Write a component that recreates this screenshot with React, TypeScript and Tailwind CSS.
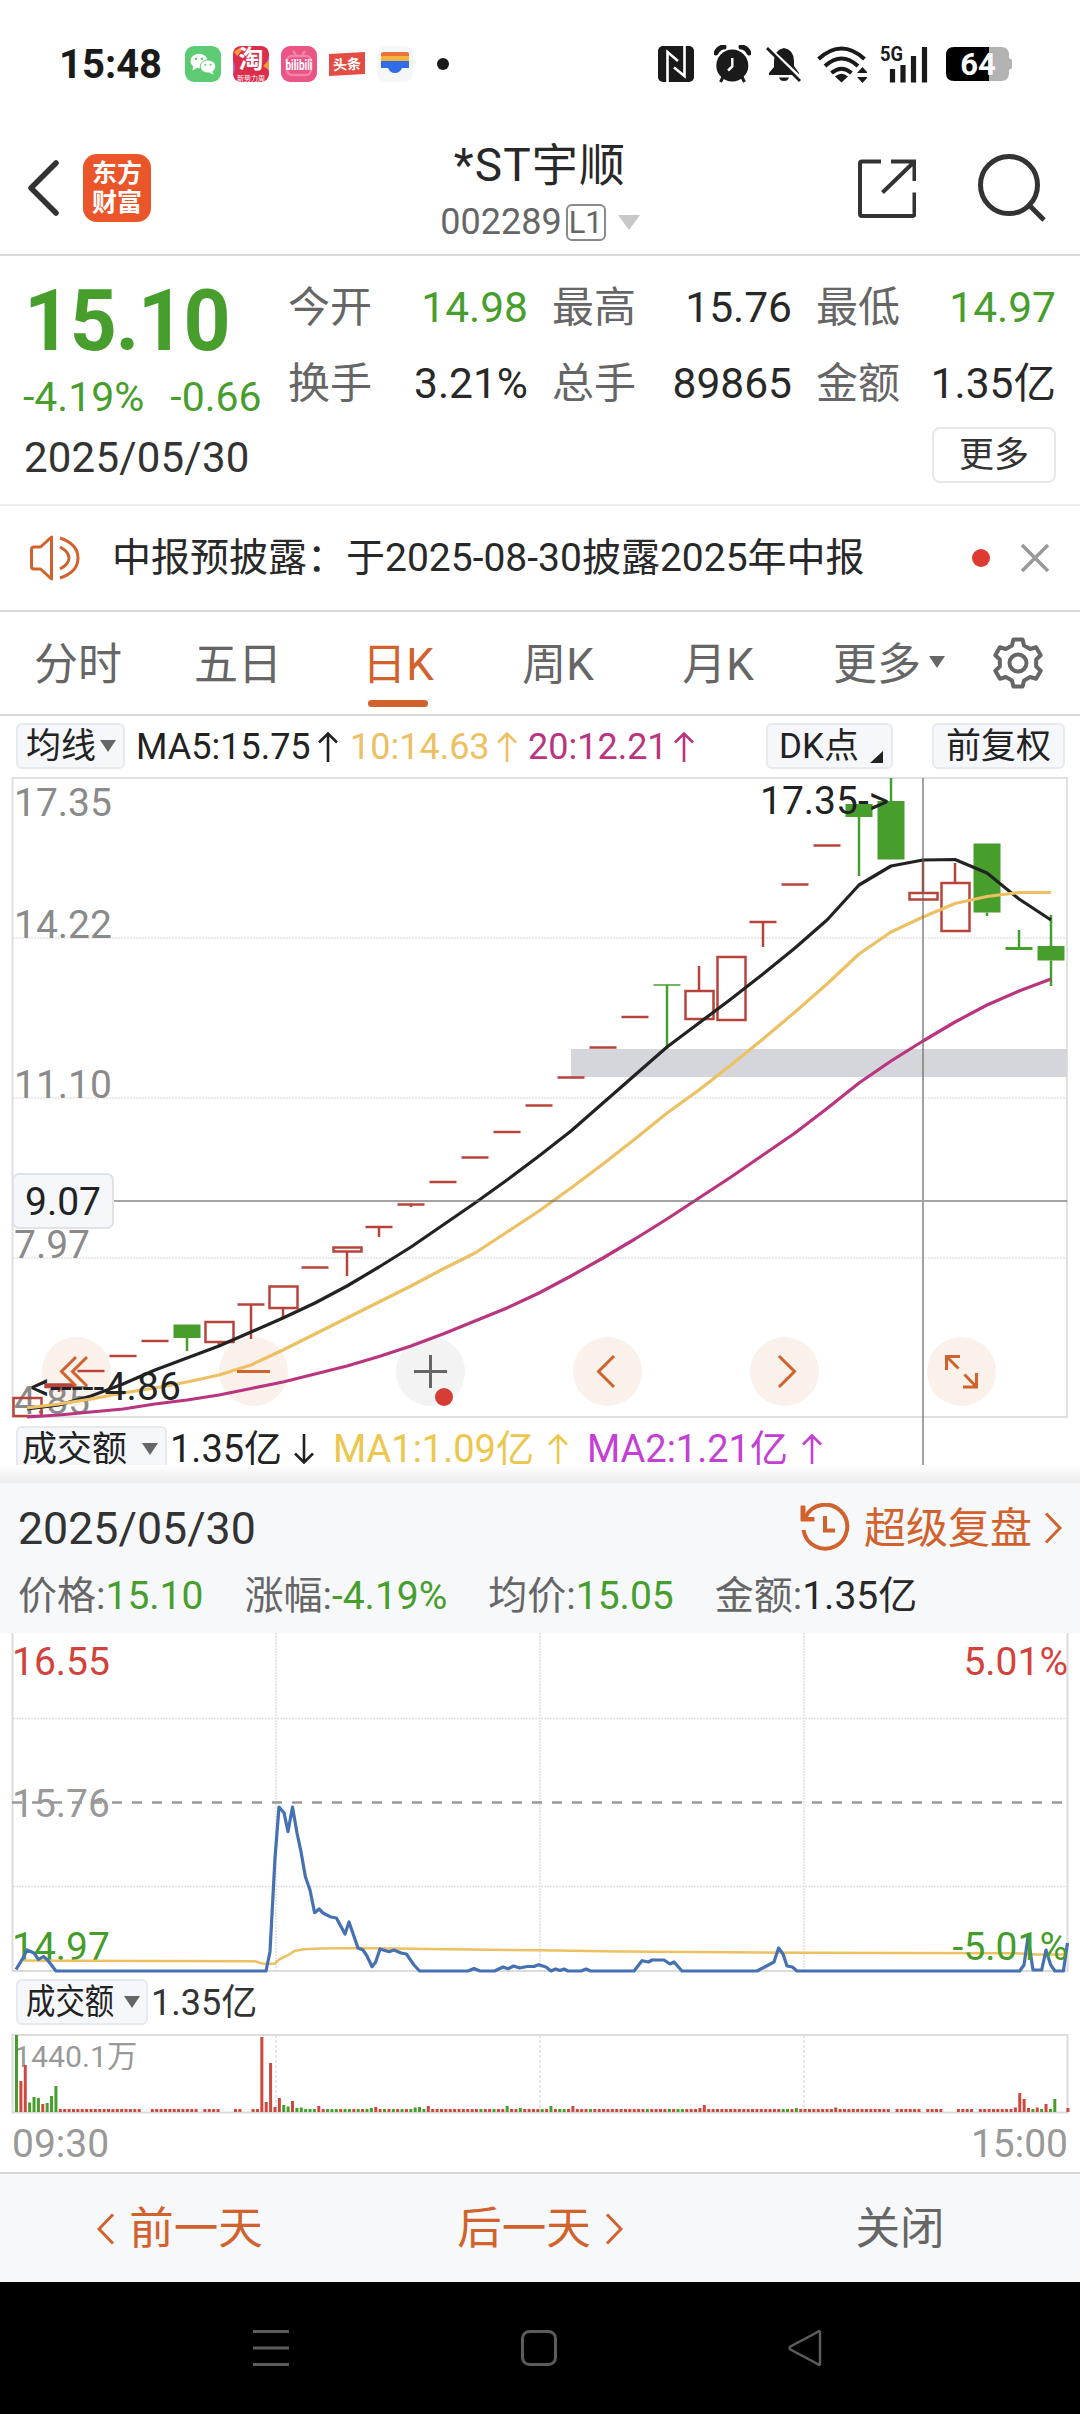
import { Fragment, type ReactNode } from 'react';

type Point = [number, number];

interface Candle {
    kind: 'up' | 'down' | 'flat' | 'flatDown';
    top: number;
    bottom: number;
    high?: number;
    low?: number;
}

const RED = '#b8433b';
const GREEN = '#479e2d';
const ORANGE = '#d2622d';

// y values are chart pixels, 17.35 sits on 778 and 4.85 on 1418
const CANDLES: Candle[] = [
    { kind: 'up', top: 1398, bottom: 1416 },
    { kind: 'up', top: 1384.5, bottom: 1387, low: 1392 },
    { kind: 'flat', top: 1371, bottom: 1371 },
    { kind: 'flat', top: 1356, bottom: 1356 },
    { kind: 'flat', top: 1341, bottom: 1341 },
    { kind: 'down', top: 1324.5, bottom: 1338, low: 1351 },
    { kind: 'up', top: 1322, bottom: 1342, low: 1347 },
    { kind: 'flat', top: 1304.5, bottom: 1304.5, low: 1339 },
    { kind: 'up', top: 1286.5, bottom: 1308, low: 1319 },
    { kind: 'flat', top: 1267.5, bottom: 1267.5 },
    { kind: 'up', top: 1247.5, bottom: 1251.5, low: 1276 },
    { kind: 'flat', top: 1227, bottom: 1227, low: 1237 },
    { kind: 'flat', top: 1204.5, bottom: 1204.5, low: 1207 },
    { kind: 'flat', top: 1182, bottom: 1182 },
    { kind: 'flat', top: 1157.5, bottom: 1157.5 },
    { kind: 'flat', top: 1132, bottom: 1132 },
    { kind: 'flat', top: 1105.5, bottom: 1105.5 },
    { kind: 'flat', top: 1077.5, bottom: 1077.5 },
    { kind: 'flat', top: 1047.5, bottom: 1047.5 },
    { kind: 'flat', top: 1017, bottom: 1017 },
    { kind: 'flatDown', top: 985, bottom: 985, low: 1049 },
    { kind: 'up', top: 991, bottom: 1019, high: 966 },
    { kind: 'up', top: 957, bottom: 1020 },
    { kind: 'flat', top: 922, bottom: 922, low: 947 },
    { kind: 'flat', top: 884.5, bottom: 884.5 },
    { kind: 'flat', top: 845.5, bottom: 845.5 },
    { kind: 'down', top: 804, bottom: 817, low: 876 },
    { kind: 'down', top: 801, bottom: 859.5, high: 778 },
    { kind: 'up', top: 893, bottom: 899.5, high: 861 },
    { kind: 'up', top: 883, bottom: 931, high: 863 },
    { kind: 'down', top: 843.5, bottom: 912.5, low: 916 },
    { kind: 'down', top: 947, bottom: 950, high: 930 },
    { kind: 'down', top: 946, bottom: 960.5, high: 915, low: 986 },
];

const candleX = (i: number) => 27 + i * 32;

const MA5 = [
    1409, 1405, 1396, 1384, 1370, 1358, 1346, 1332, 1318, 1303, 1286, 1267, 1247, 1225, 1203, 1180, 1156,
    1131, 1103, 1075, 1047, 1023, 999, 974, 948, 920, 885, 866, 860, 859.5, 873, 899, 920,
];
const MA10 = [
    1408, 1404, 1399, 1393, 1388, 1382, 1375, 1365, 1350, 1334, 1318, 1302, 1286, 1269, 1253, 1232, 1211,
    1188, 1164, 1139, 1113, 1090, 1065, 1039, 1012, 984, 954, 932, 917, 903.5, 896.5, 892.5, 892.5,
];
const MA20 = [
    1417, 1415, 1412, 1409, 1404, 1400, 1395, 1388.5, 1382, 1374, 1366, 1356.5, 1346, 1334, 1321, 1308, 1293,
    1276, 1258, 1239, 1219, 1198, 1177, 1155, 1133, 1108.5, 1083, 1061, 1041, 1022, 1005, 991, 979,
];

const PRICE_LINE: Point[] = [
    [16, 1969.5], [23, 1958], [27, 1950], [34, 1953], [38.5, 1959.5], [43.5, 1956.5], [47.5, 1960], [56, 1971],
    [266, 1971], [270, 1951.7], [275, 1858], [279, 1807], [284, 1812.7], [288, 1831.7], [292.5, 1807], [297, 1833],
    [301, 1851.7], [305.4, 1876.7], [310, 1890], [314.6, 1912.7], [319, 1909], [323, 1913], [330, 1916.7],
    [336.4, 1918], [345, 1934], [349, 1922], [358, 1948], [363, 1950], [367, 1956], [372, 1966.7], [375.7, 1962],
    [380, 1949], [389, 1951.7], [394, 1950], [401, 1953], [406.4, 1954], [414, 1965], [419.6, 1971], [468, 1971],
    [474, 1968.5], [480, 1971], [494.6, 1971], [503, 1967], [508, 1968.7], [513.6, 1966], [519.6, 1968], [527, 1966.5],
    [534, 1966.5], [538.6, 1964.7], [546, 1967], [551, 1971], [555.5, 1969], [560, 1970.5], [564, 1969], [568, 1971],
    [581, 1971], [586, 1969], [590.6, 1971], [634, 1971], [642, 1960.7], [648.5, 1962], [652, 1960], [664, 1960],
    [670, 1964], [674, 1962], [682, 1971], [757, 1971], [774, 1962], [778.6, 1948], [783, 1954], [787, 1966],
    [792.4, 1967], [797, 1971], [1019.7, 1971], [1024, 1965], [1028, 1937], [1033, 1970], [1041.7, 1970],
    [1046, 1950], [1050.7, 1965], [1055, 1971], [1063.4, 1971], [1067.5, 1943],
];

const AVG_LINE: Point[] = [
    [23, 1960.5], [60, 1960.7], [255, 1961.3], [262, 1963.5], [266, 1964], [275, 1963.5], [279, 1959.5], [288.6, 1955],
    [294.6, 1951], [303.6, 1949.3], [321, 1948.5], [357, 1948], [429, 1949], [540, 1950.3], [620, 1951.5],
    [804, 1952.7], [1015, 1953.3], [1036, 1954.5], [1066, 1954.5],
];

// minute volume: index -> height in px, negative means a falling minute
const VOLUME: Record<number, number> = {
    0: -77, 1: 31, 2: 47, 3: -9.5, 4: -15, 5: -14, 6: 8, 7: -9, 8: -16, 9: -26,
    56: 75, 57: 10, 58: 49, 59: 5, 60: 14, 61: -7, 62: -5.5, 63: 11, 64: -4, 65: -4.5, 69: 6,
    81: -4, 82: 5, 91: -4.5, 92: -5, 94: 6, 112: -6, 115: -4, 122: -6, 127: 6, 156: 4, 157: 7,
    178: -4, 187: 4.5, 228: 4.5, 229: 19, 230: 13, 231: 4, 233: 4.5, 235: 8, 237: -13, 240: 4,
};
const FALLING = [66, 67, 68, 71, 72, 73, 75, 76, 78, 80, 84, 86, 88, 90, 93, 106, 109, 120, 124, 125, 131, 144, 149, 151, 152, 175, 176, 232, 234, 236];
const EMPTY = [29, 30, 42, 47, 48, 49, 52, 53, 200, 207, 212, 213, 214, 219, 238, 239];

const toPoints = (pts: Point[]) => pts.map(p => p.join(',')).join(' ');
const maPoints = (ys: number[]) => ys.map((y, i) => `${candleX(i)},${y}`).join(' ');

const QUOTES = [
    { label: '今开', value: '14.98', down: true },
    { label: '最高', value: '15.76' },
    { label: '最低', value: '14.97', down: true },
    { label: '换手', value: '3.21%' },
    { label: '总手', value: '89865' },
    { label: '金额', value: '1.35亿' },
];

const TABS = ['分时', '五日', '日K', '周K', '月K'];

const SUMMARY = [
    { label: '价格', value: '15.10', down: true },
    { label: '涨幅', value: '-4.19%', down: true },
    { label: '均价', value: '15.05', down: true },
    { label: '金额', value: '1.35亿' },
];

function gearPath() {
    const pts: string[] = [];
    for (let k = 0; k < 6; k++) {
        const steps: Point[] = [[-19, 18.5], [-11, 24], [11, 24], [19, 18.5]];
        steps.forEach(([deg, r]) => {
            const a = ((k * 60 - 90 + deg) * Math.PI) / 180;
            pts.push(`${(26 + r * Math.cos(a)).toFixed(2)},${(26 + r * Math.sin(a)).toFixed(2)}`);
        });
    }
    return `M${pts.join('L')}Z`;
}

function Arrow({ color, down, className = '' }: { color: string; down?: boolean; className?: string }) {
    return (
        <svg width="20" height="30" viewBox="0 0 20 30" className={className}>
            <path
                d={down ? 'M10 0V29M1 19.5L10 28.5L19 19.5' : 'M10 30V1M1 10.5L10 1.5L19 10.5'}
                fill="none" stroke={color} strokeWidth="2.6"
            />
        </svg>
    );
}

function Caret({ color = '#666', w = 16, h = 12 }: { color?: string; w?: number; h?: number }) {
    return (
        <svg width={w} height={h} viewBox="0 0 16 12" preserveAspectRatio="none">
            <path d="M0 0H16L8 12Z" fill={color} />
        </svg>
    );
}

function Chevron({ left, color = ORANGE }: { left?: boolean; color?: string }) {
    return (
        <svg width="18" height="32" viewBox="0 0 18 32">
            <path d={left ? 'M16 1.5L2 16L16 30.5' : 'M2 1.5L16 16L2 30.5'} fill="none" stroke={color} strokeWidth="3" />
        </svg>
    );
}

function Chip({ children, className = '' }: { children: ReactNode; className?: string }) {
    return (
        <div className={`flex h-[46px] shrink-0 items-center rounded-md border-2 border-[#e6e9ed] bg-[#f6f7fa] text-[35px] text-[#222] ${className}`}>
            {children}
        </div>
    );
}

function StatusBar() {
    return (
        <div className="flex h-32 items-center pl-[59px] text-[#1a1a1a]">
            <span className="w-[126px] pt-0.5 text-[40px] font-bold">15:48</span>
            <div className="flex items-center gap-3">
                <svg width="36" height="36" viewBox="0 0 36 36">
                    <rect width="36" height="36" rx="9" fill="#5ccb73" />
                    <ellipse cx="14" cy="15" rx="8.5" ry="7.3" fill="#fff" />
                    <path d="M8 20L7.5 24.5L12 22Z" fill="#fff" />
                    <ellipse cx="23" cy="20.5" rx="7.8" ry="6.6" fill="#fff" stroke="#5ccb73" strokeWidth="1" />
                    <path d="M27 25L28.5 28.5L24 26.5Z" fill="#fff" />
                    <g fill="#5ccb73">
                        <circle cx="11" cy="12.8" r="1.2" /><circle cx="17" cy="12.8" r="1.2" />
                        <circle cx="20.4" cy="18.8" r="1" /><circle cx="25.6" cy="18.8" r="1" />
                    </g>
                </svg>
                <svg className="overflow-visible" width="36" height="36" viewBox="0 0 36 36">
                    <rect width="36" height="36" rx="8" fill="#dc2d4a" />
                    <path d="M0 14Q4 24 0 28ZM36 10Q31 20 36 26Z" fill="#b96ad0" />
                    <path d="M1 6Q6 1 12 1L4 10ZM30 20L36 14V24Z" fill="#f29a3c" />
                    <text x="18" y="22" textAnchor="middle" fontSize="25" fontWeight="700" fill="#fff">淘</text>
                    <text x="18" y="34.5" textAnchor="middle" fontSize="7" fill="#fff">新势力周</text>
                </svg>
                <svg className="overflow-visible" width="36" height="36" viewBox="0 0 36 36">
                    <rect width="36" height="36" rx="9" fill="#ea5586" />
                    <rect x="6" y="10" width="24" height="19" rx="5" fill="none" stroke="#f283a7" strokeWidth="2.4" />
                    <path d="M12 5L15 9M24 5L21 9" stroke="#f283a7" strokeWidth="2.4" />
                    <text x="18" y="24" textAnchor="middle" fontSize="14" fontWeight="700" fill="#fff" textLength="27" lengthAdjust="spacingAndGlyphs">bilibili</text>
                </svg>
                <svg className="overflow-visible" width="36" height="36" viewBox="0 0 36 36">
                    <path d="M0 8L36 6V28L0 30Z" fill="#e44b43" />
                    <text x="18" y="23.500" textAnchor="middle" fontSize="14" fontWeight="700" fill="#fff" transform="rotate(-3 18 18)">头条</text>
                </svg>
                <svg width="36" height="36" viewBox="0 0 36 36">
                    <rect width="36" height="36" rx="9" fill="#f5f6f8" />
                    <path d="M4 10V8Q4 6 6 6H30Q32 6 32 8V10Z" fill="#e8743b" />
                    <rect x="4" y="10" width="28" height="5" fill="#f5b43e" />
                    <path d="M4 15H32V22H25Q23 27 18 27Q13 27 11 22H4Z" fill="#2f6ee6" />
                </svg>
            </div>
            <span className="ml-6 h-3 w-3 rounded-full bg-[#1a1a1a]" />
            <svg className="ml-[209px]" width="36" height="36" viewBox="0 0 36 36">
                <rect width="36" height="36" rx="5" fill="#1a1a1a" />
                <path d="M9.5 36V6L20 15M26.5 0V30L16 21.5" fill="none" stroke="#fff" strokeWidth="2.6" />
            </svg>
            <svg className="ml-5" width="37" height="38" viewBox="0 0 37 38">
                <circle cx="18.3" cy="20.5" r="16" fill="#1a1a1a" />
                <path d="M2 8Q5 2 10 2M35 8Q32 2 27 2" stroke="#1a1a1a" strokeWidth="5" fill="none" strokeLinecap="round" />
                <path d="M9 32L6.5 37M28 32L30.5 37" stroke="#1a1a1a" strokeWidth="3" />
                <path d="M18.3 13V21.5L14 25.5" stroke="#fff" strokeWidth="2.4" fill="none" />
            </svg>
            <svg className="ml-[15px]" width="36" height="36" viewBox="0 0 36 36">
                <path d="M18 2Q28 4 28 15V20L33 27V29H3V27L8 21V15Q8 4 18 2Z" fill="#1a1a1a" />
                <path d="M13 31.5H23Q22 35 18 35Q14 35 13 31.5Z" fill="#1a1a1a" />
                <path d="M0 -1L36 33" stroke="#fff" strokeWidth="3" />
                <path d="M1 2L34 35" stroke="#1a1a1a" strokeWidth="2.8" />
            </svg>
            <svg className="ml-[15px]" width="50" height="37" viewBox="0 0 50 37">
                <path d="M1.5 13Q24.5 -8 47.5 13M8 20Q24.5 5 41 20M14.5 27Q24.5 18.5 34.5 27" fill="none" stroke="#1a1a1a" strokeWidth="4" />
                <path d="M18 30.5Q24.5 25 31 30.5L24.5 36.5Z" fill="#1a1a1a" />
                <path d="M40 27H51L45.5 21ZM40 31H51L45.5 37Z" fill="#1a1a1a" />
            </svg>
            <svg className="ml-[13px] overflow-visible" width="49" height="38" viewBox="0 0 49 38">
                <text x="0" y="16" fontSize="21" fontWeight="700" fill="#1a1a1a" textLength="23" lengthAdjust="spacingAndGlyphs">5G</text>
                <path d="M12.5 37.5V24M23 37.5V20M33.5 37.5V11M44.5 37.5V2" stroke="#1a1a1a" strokeWidth="5.2" />
            </svg>
            <svg className="ml-[17px] overflow-visible" width="66" height="34" viewBox="0 0 66 34">
                <path d="M43 0H55Q63 0 63 8V11L66 13V21L63 23V26Q63 34 55 34H43Z" fill="#b3b3b3" />
                <path d="M43 0H8Q0 0 0 8V26Q0 34 8 34H43Z" fill="#000" />
                <text x="32" y="28" textAnchor="middle" fontSize="31" fontWeight="700" fill="#fff">64</text>
            </svg>
        </div>
    );
}

function Header() {
    return (
        <header className="flex h-32 items-center border-b-2 border-[#d9d9d9] pb-1.5 pl-7">
            <svg width="32" height="56" viewBox="0 0 32 56">
                <path d="M28 3L3 28L28 53" fill="none" stroke="#333" strokeWidth="5.5" strokeLinecap="round" strokeLinejoin="round" />
            </svg>
            <div className="ml-[23px] flex h-[68px] w-[68px] flex-col items-center justify-center rounded-[14px] bg-[#ea5529] text-[25px] leading-[29px] font-bold text-white">
                <span>东方</span>
                <span>财富</span>
            </div>
            <div className="ml-[239px] mt-[9px] flex w-[300px] flex-col items-center self-start">
                <h1 className="h-14 text-[46px] leading-[56px] tracking-[1.2px] whitespace-nowrap text-[#282828]">*ST宇顺</h1>
                <div className="flex h-14 items-center pt-0.5 text-[36px] text-[#666]">
                    002289
                    <span className="ml-1 flex h-[37px] w-10 items-center justify-center rounded-md border-2 border-[#8a8a8a] text-[31px]">L1</span>
                    <span className="ml-3 flex"><Caret color="#c8c8c8" w={22} h={15} /></span>
                </div>
            </div>
            <svg className="ml-[166px]" width="60" height="60" viewBox="0 0 60 60">
                <path d="M25 3.5H6Q4 3.5 4 5.5V56Q4 58 6 58H56.500Q58.5 58 58.5 56V34.500" fill="none" stroke="#333" strokeWidth="4" />
                <path d="M35 3.500H58.5V23M26.500 34.500L57 5" fill="none" stroke="#333" strokeWidth="4" />
            </svg>
            <svg className="-mt-0.5 ml-[60px]" width="70" height="70" viewBox="0 0 70 70">
                <circle cx="33" cy="33" r="28.500" fill="none" stroke="#333" strokeWidth="5" />
                <path d="M53 53L68 68" stroke="#333" strokeWidth="5" />
            </svg>
        </header>
    );
}

function Quote() {
    return (
        <section className="h-[250px] border-b-2 border-[#ededed] px-6">
            <div className="flex h-[174px] text-[#479e2d]">
                <div className="w-[264px] shrink-0 pt-6">
                    <div className="flex h-[82px] items-center text-[86px] font-bold tracking-[-1.5px]">
                        <span className="origin-left scale-x-[.955]">15.10</span>
                    </div>
                    <div className="flex h-[70px] items-center gap-[26px] text-[41px]">
                        <span className="-ml-px">-4.19%</span>
                        <span>-0.66</span>
                    </div>
                </div>
                <div className="grid h-[165px] w-[768px] shrink-0 auto-rows-[76px] grid-cols-3 gap-x-6 pt-3.5 text-[42px]">
                    {QUOTES.map(q => (
                        <div key={q.label} className="flex items-center justify-between whitespace-nowrap">
                            <span className="text-[#666]">{q.label}</span>
                            <span className={`text-[42.5px] ${q.down ? 'text-[#479e2d]' : 'text-[#282828]'}`}>{q.value}</span>
                        </div>
                    ))}
                </div>
            </div>
            <div className="flex h-[54px] items-center justify-between">
                <span className="pt-0.5 text-[42px] tracking-[.2px] text-[#333]">2025/05/30</span>
                <button className="-mt-1 h-14 w-[124px] rounded-lg border-2 border-[#e6e8eb] text-[35px] text-[#333]">更多</button>
            </div>
        </section>
    );
}

function Notice() {
    return (
        <section className="flex h-[106px] items-center border-b-2 border-[#d9d9d9] pl-[29px]">
            <svg width="52" height="46" viewBox="0 0 52 46">
                <path d="M22.500 2V44L11.500 34H5Q2.500 34 2.500 31.500V14.500Q2.500 12 5 12H11.500Z" fill="none" stroke={ORANGE} strokeWidth="3" strokeLinejoin="round" />
                <path d="M31 12Q40 17 40 23Q40 29 31 34M31 3Q49 9 49 23Q49 37 31 43" fill="none" stroke={ORANGE} strokeWidth="3" />
            </svg>
            <span className="ml-[31px] w-[860px] text-[39px] whitespace-nowrap text-[#282828]">中报预披露：于2025-08-30披露2025年中报</span>
            <span className="h-[18px] w-[18px] shrink-0 rounded-full bg-[#dd3b32]" />
            <svg className="ml-[30px]" width="30" height="30" viewBox="0 0 30 30">
                <path d="M2 2L28 28M28 2L2 28" stroke="#999" strokeWidth="3.500" />
            </svg>
        </section>
    );
}

function Tabs() {
    return (
        <nav className="flex h-[104px] border-b-2 border-[#d9d9d9] text-[44px] text-[#666]">
            <div className="-ml-0.5 flex">
                {TABS.map(t => (
                    <div key={t} className={`relative flex w-40 items-center justify-center pt-1 ${t === '日K' ? 'text-[#d2622d]' : ''}`}>
                        {t}
                        {t === '日K' && <span className="absolute bottom-[7px] h-[7px] w-[60px] rounded-full bg-[#d2622d]" />}
                    </div>
                ))}
            </div>
            <div className="flex w-[194px] items-center gap-2 pt-1 pl-[35px]">
                更多
                <span className="-mt-1.5 flex"><Caret /></span>
            </div>
            <div className="flex items-center">
                <svg width="52" height="52" viewBox="0 0 52 52">
                    <path d={gearPath()} fill="none" stroke="#666" strokeWidth="4" strokeLinejoin="round" />
                    <circle cx="26" cy="26" r="8.500" fill="none" stroke="#666" strokeWidth="4" />
                </svg>
            </div>
        </nav>
    );
}

function MaRow() {
    return (
        <div className="flex h-[62px] items-center pr-[15px] pl-4 text-[36px] whitespace-nowrap">
            <Chip className="-mt-0.5 w-[109px] gap-1 pl-2">均线<Caret /></Chip>
            <span className="ml-[11px] w-[173px] text-[#222]">MA5:15.75</span>
            <Arrow color="#222" className="ml-[9px]" />
            <span className="ml-3 w-[137px] text-[#ecc063]">10:14.63</span>
            <Arrow color="#ecc063" className="ml-[10px]" />
            <span className="ml-[11px] w-[138px] text-[#b9357f]">20:12.21</span>
            <Arrow color="#b9357f" className="ml-[8px]" />
            <Chip className="-mt-0.5 ml-auto w-[127px] pl-[11px]">
                DK点
                <svg className="ml-[11px] mt-[22px]" width="13" height="12" viewBox="0 0 13 12"><path d="M13 0V12H0Z" fill="#222" /></svg>
            </Chip>
            <Chip className="-mt-0.5 ml-[39px] w-[133px] justify-center">前复权</Chip>
        </div>
    );
}

function CandleShape({ candle, x }: { candle: Candle; x: number }) {
    const { kind, top, bottom, high, low } = candle;
    const color = kind === 'down' || kind === 'flatDown' ? GREEN : RED;
    return (
        <g stroke={color} strokeWidth="2.5" fill="none">
            {high !== undefined && <path d={`M${x} ${high}V${top}`} />}
            {low !== undefined && <path d={`M${x} ${bottom}V${low}`} />}
            {kind === 'up' && <rect x={x - 13.5} y={top} width="28" height={bottom - top} />}
            {kind === 'down' && <rect x={x - 13.500} y={top} width="27" height={bottom - top} fill={color} stroke="none" />}
            {kind === 'flat' && <path d={`M${x - 13.500} ${top}H${x + 13.500}`} />}
            {kind === 'flatDown' && <path d={`M${x - 13.500} ${top}H${x + 13.500}`} strokeWidth="1.500" />}
        </g>
    );
}

function KLineChart() {
    return (
        <svg className="block overflow-visible" width="1080" height="640" viewBox="0 778 1080 640">
            <g stroke="#e3e3e3" strokeWidth="1.5" strokeDasharray="2 1">
                <path d="M13 938H1067M13 1098H1067M13 1258H1067" />
            </g>
            <rect x="12.500" y="778" width="1054.500" height="639" fill="none" stroke="#e0e0e0" strokeWidth="2" />
            <rect x="571" y="1049" width="496" height="28" fill="#d5d6db" />
            {[76.5, 253.5, 430.5, 607.5, 784.5, 961.5].map((cx, i) => (
                <circle key={cx} cx={cx} cy="1371.500" r="34.500" fill={i === 2 ? '#f3f3f3' : '#fbf1eb'} />
            ))}
            <g fontSize="39" fill="#8a8a8a">
                <text x="14" y="815.500">17.35</text>
                <text x="14" y="938">14.22</text>
                <text x="14" y="1098">11.10</text>
                <text x="14" y="1258">7.97</text>
                <text x="14" y="1414">4.85</text>
            </g>
            {CANDLES.map((c, i) => <CandleShape key={i} candle={c} x={candleX(i)} />)}
            <g fill="none" strokeWidth="3.200" strokeLinejoin="round">
                <polyline points={maPoints(MA5)} stroke="#222" />
                <polyline points={maPoints(MA10)} stroke="#ecc063" />
                <polyline points={maPoints(MA20)} stroke="#b9357f" />
            </g>
            <path d="M113 1201H1067M923 778V1465" stroke="#666" strokeOpacity=".6" strokeWidth="2" />
            <g fontSize="39" fill="#222">
                <text x="760" y="814">17.35-&gt;</text>
                <text x="30" y="1400" textLength="151">&lt;-----4.86</text>
            </g>
            <rect x="13" y="1174" width="100" height="54" rx="6" fill="#f6f7fa" stroke="#dfe2e6" strokeWidth="2" />
            <text x="25" y="1215" fontSize="39" fill="#222">9.07</text>
            <g fill="none" stroke={ORANGE} strokeWidth="3">
                <path d="M76 1357L61.500 1371.500L76 1386M87 1357L72.500 1371.500L87 1386" />
                <path d="M237 1371.500H270" />
                <path d="M614 1356L598.500 1371.500L614 1387M779 1356L794.500 1371.500L779 1387" />
                <path d="M946.500 1370V1356.500H960M946.500 1356.500L958.500 1368.500M976.500 1373V1387H963M976.500 1387L964.500 1374.500" />
            </g>
            <path d="M414 1371.500H447M430.500 1355V1388" stroke="#666" strokeWidth="3" />
            <circle cx="444" cy="1397" r="9" fill="#d53c33" />
        </svg>
    );
}

function AmountRow() {
    return (
        <div className="flex h-[47px] items-start overflow-hidden pt-2 pl-4 text-[38px] whitespace-nowrap">
            <Chip className="w-[151px] gap-[15px] pl-1">成交额<Caret /></Chip>
            <div className="flex h-[45px] items-center">
                <span className="ml-[3px] w-[117px] text-[#222]">1.35亿</span>
                <Arrow color="#222" down className="ml-[7px]" />
                <span className="ml-[19px] w-[202px] text-[#ecc64d]">MA1:1.09亿</span>
                <Arrow color="#ecc64d" className="ml-[13px]" />
                <span className="ml-[19px] w-[202px] text-[#c43fd3]">MA2:1.21亿</span>
                <Arrow color="#c43fd3" className="ml-[13px]" />
            </div>
        </div>
    );
}

function DayPanel() {
    return (
        <div className="h-[150px] bg-[#f6f8fa] px-[18px]">
            <div className="flex h-[90px] items-center justify-between">
                <span className="pt-0.5 text-[44.7px] text-[#333]">2025/05/30</span>
                <div className="flex items-center text-[42px] text-[#d2622d]">
                    <svg width="50" height="50" viewBox="0 0 50 50">
                        <path d="M5.500 14A22 22 0 1 1 3.500 27" fill="none" stroke={ORANGE} strokeWidth="4" />
                        <path d="M1 3V18H14V14.500H5V3Z" fill={ORANGE} stroke={ORANGE} strokeWidth="1" />
                        <path d="M25 13V27.500H35" fill="none" stroke={ORANGE} strokeWidth="4" />
                    </svg>
                    <span className="ml-[14px] mr-[12px] pt-0.5">超级复盘</span>
                    <Chevron />
                </div>
            </div>
            <div className="flex h-[47px] items-center gap-[41px] text-[39px]">
                {SUMMARY.map(s => (
                    <span key={s.label} className="text-[#666]">
                        {s.label}:<span className={s.down ? 'text-[#479e2d]' : 'text-[#282828]'}>{s.value}</span>
                    </span>
                ))}
            </div>
        </div>
    );
}

function MinuteChart() {
    return (
        <svg className="block" width="1080" height="340" viewBox="0 1633 1080 340">
            <path d="M12.500 1633V1971H1067.500V1633" fill="none" stroke="#dcdcdc" strokeWidth="2" />
            <path d="M13 1718.500H1067M13 1886.500H1067M276 1633V1971M540 1633V1971M804 1633V1971" stroke="#e0e0e0" strokeWidth="1.500" strokeDasharray="2 1" />
            <path d="M12 1802.500H1067" stroke="#999" strokeWidth="2.500" strokeDasharray="10 10" />
            <g fontSize="39">
                <text x="12" y="1675" fill="#d3423a">16.55</text>
                <text x="12" y="1817" fill="#999">15.76</text>
                <text x="12" y="1960" fill="#469c2b">14.97</text>
                <text x="1068" y="1675" fill="#d3423a" textAnchor="end">5.01%</text>
            </g>
            <polyline points={toPoints(AVG_LINE)} fill="none" stroke="#ecc063" strokeWidth="2.500" />
            <polyline points={toPoints(PRICE_LINE)} fill="none" stroke="#4571b3" strokeWidth="3.200" strokeLinejoin="round" />
            <text x="1068" y="1960" fontSize="39" fill="#469c2b" textAnchor="end">-5.01%</text>
        </svg>
    );
}

function VolumeChart() {
    const bars = Array.from({ length: 241 }, (_, i) => i).filter(i => !EMPTY.includes(i));
    return (
        <svg className="block" width="1080" height="80" viewBox="0 2034 1080 80">
            <rect x="12.500" y="2035" width="1055" height="77.500" fill="none" stroke="#dcdcdc" strokeWidth="2" />
            <path d="M276 2035V2112M540 2035V2112M804 2035V2112" stroke="#e0e0e0" strokeWidth="1.500" strokeDasharray="3 2" />
            <text x="14" y="2067" fontSize="30.300" fill="#999">1440.1万</text>
            {bars.map(i => {
                const v = VOLUME[i] ?? (FALLING.includes(i) ? -3 : 3);
                const h = Math.abs(v);
                return <rect key={i} x={15 + i * 4.381} y={2112 - h} width="3" height={h} fill={v < 0 ? '#479e2d' : '#d0473e'} />;
            })}
        </svg>
    );
}

function Footer() {
    return (
        <Fragment>
            <div className="grid h-[110px] grid-cols-3 border-t-2 border-[#d5d6d8] bg-[#f6f8fa] pt-0.5 text-[44.5px] text-[#d2622d]">
                <div className="flex items-center justify-center gap-[14px]"><Chevron left />前一天</div>
                <div className="flex items-center justify-center gap-[14px]">后一天<Chevron /></div>
                <div className="flex items-center justify-center text-[#666]">关闭</div>
            </div>
            <div className="flex h-[132px] items-center bg-black pl-[251px]">
                <svg width="40" height="40" viewBox="0 0 40 40"><path d="M2 3.500H38M2 20H38M2 36.500H38" stroke="#5c5c5c" strokeWidth="3" /></svg>
                <svg className="ml-[228px]" width="40" height="40" viewBox="0 0 40 40">
                    <rect x="3.500" y="3.500" width="33" height="33" rx="7" fill="none" stroke="#5c5c5c" strokeWidth="3" />
                </svg>
                <svg className="ml-[227px]" width="40" height="40" viewBox="0 0 40 40">
                    <path d="M34 4.500Q34 2 32 3.800L4.500 18.500Q2.500 20 4.500 21.500L32 36.200Q34 38 34 35.500Z" fill="none" stroke="#5c5c5c" strokeWidth="2.500" />
                </svg>
            </div>
        </Fragment>
    );
}

export default function App() {
    return (
        <div className="w-[1080px] overflow-hidden bg-white font-['Roboto','Noto_Sans_CJK_SC',sans-serif] leading-none">
            <StatusBar />
            <Header />
            <Quote />
            <Notice />
            <Tabs />
            <MaRow />
            <KLineChart />
            <AmountRow />
            <div className="h-[18px] bg-linear-to-b from-white to-[#ececec]" />
            <DayPanel />
            <MinuteChart />
            <div className="flex h-[61px] items-center pb-[3px] pl-4 whitespace-nowrap">
                <Chip className="w-[132px] pl-2">
                    <span className="w-[98px] shrink-0"><span className="inline-block origin-left scale-x-[.84]">成交额</span></span>
                    <Caret />
                </Chip>
                <span className="ml-[3px] pt-0.5 text-[36px] text-[#333]">1.35亿</span>
            </div>
            <VolumeChart />
            <div className="flex h-[58px] items-center justify-between px-3 pt-0.5 text-[39px] text-[#999]">
                <span>09:30</span>
                <span>15:00</span>
            </div>
            <Footer />
        </div>
    );
}
